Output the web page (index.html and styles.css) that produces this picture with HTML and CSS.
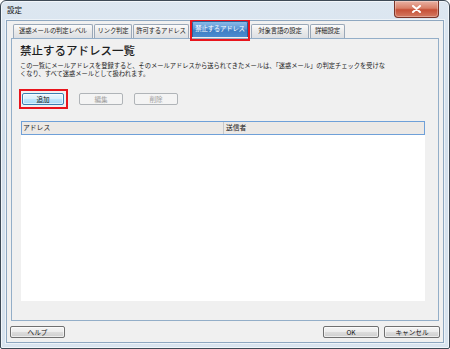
FILE: index.html
```html
<!DOCTYPE html>
<html lang="ja">
<head>
<meta charset="utf-8">
<title>設定</title>
<link rel="stylesheet" href="styles.css">
</head>
<body>
<div class="window">
  <div class="titlebar">
    <span class="title">設定</span>
    <div class="close">
      <svg width="11" height="8" viewBox="0 0 11 8"><path d="M2 1 L9 7 M9 1 L2 7" stroke="#fff" stroke-width="2" stroke-linecap="round"/></svg>
    </div>
  </div>
  <div class="client">
    <div class="tabs">
      <div class="tab t1">迷惑メールの判定レベル</div>
      <div class="tab t2">リンク判定</div>
      <div class="tab t3">許可するアドレス</div>
      <div class="mark mark-tab"><div class="tab t4 selected">禁止するアドレス</div></div>
      <div class="tab t5">対象言語の設定</div>
      <div class="tab t6">詳細設定</div>
    </div>
    <div class="panel">
      <h1 class="heading">禁止するアドレス一覧</h1>
      <p class="desc">この一覧にメールアドレスを登録すると、そのメールアドレスから送られてきたメールは、「迷惑メール」の判定チェックを受けな<br>くなり、すべて迷惑メールとして扱われます。</p>
      <div class="actions">
        <div class="mark mark-btn"><div class="btn highlight">追加</div></div>
        <div class="btn disabled">編集</div>
        <div class="btn disabled">削除</div>
      </div>
      <div class="list">
        <div class="list-head">
          <div class="col col-addr">アドレス</div>
          <div class="col col-sender">送信者</div>
        </div>
        <div class="list-body"></div>
      </div>
    </div>
    <div class="footer">
      <div class="btn help">ヘルプ</div>
      <div class="spacer"></div>
      <div class="btn wide">OK</div>
      <div class="btn wide">キャンセル</div>
    </div>
  </div>
</div>
</body>
</html>
```
FILE: styles.css
```css
* { box-sizing: border-box; }
html, body {
  margin: 0;
  padding: 0;
  width: 450px;
  height: 349px;
  overflow: hidden;
  background: #ffffff;
  font-family: "Noto Sans CJK JP", "Noto Sans", sans-serif;
  color: #1a1a1a;
}
.window {
  width: 450px;
  height: 349px;
  border: 1px solid #3e4a56;
  border-radius: 6px 6px 2px 2px;
  background: linear-gradient(#dde7f1, #d3dfeb 40%, #d9e4ef);
  box-shadow: inset 0 0 0 1px #f2f6fa;
  display: flex;
  flex-direction: column;
}
.titlebar {
  height: 19px;
  display: flex;
  align-items: center;
  padding-left: 6px;
  padding-right: 10px;
}
.title {
  font-size: 7.5px;
  line-height: 10px;
  color: #111;
  margin-top: -2px;
}
.close {
  margin-left: auto;
  align-self: flex-start;
  width: 45px;
  height: 17px;
  border: 1px solid #7a3428;
  border-top: none;
  border-radius: 0 0 4px 4px;
  background: linear-gradient(#e9b2a4, #d98068 45%, #c65037 55%, #d47a62);
  display: flex;
  align-items: center;
  justify-content: center;
  box-shadow: inset 0 0 0 1px rgba(255,255,255,0.3);
}
.client {
  flex: 1;
  margin: 0 5px 5px 5px;
  background: #f0f0f0;
  border: 1px solid #8ea7c0;
  box-shadow: 0 0 0 1px #eef3f8;
  padding: 0 3px 0 3px;
  display: flex;
  flex-direction: column;
}
.tabs {
  height: 17px;
  display: flex;
  align-items: flex-end;
  padding-left: 3px;
}
.tab {
  height: 14px;
  margin-right: 1px;
  font-size: 6.4px;
  line-height: 12px;
  text-align: center;
  color: #222;
  border: 1px solid #9aa8b8;
  border-bottom: none;
  border-radius: 2px 2px 0 0;
  background: linear-gradient(#fbfbfb, #eaeaea 50%, #dcdfe3);
  white-space: nowrap;
  letter-spacing: -0.2px;
}
.t1 { width: 80px; }
.t2 { width: 38px; }
.t3 { width: 56px; }
.t4 { width: 56px; }
.t5 { width: 58px; margin-left: 1px; }
.t6 { width: 35px; }
.mark {
  border: 2px solid #e8141c;
}
.mark-tab {
  height: 21px;
  margin-bottom: -3px;
  padding: 0 0 2px 0;
  display: flex;
  align-items: flex-end;
  align-self: flex-end;
  position: relative;
  z-index: 1;
}
.tab.selected {
  height: 16px;
  line-height: 14px;
  margin-right: 0;
  color: #fff;
  border-color: #2c5f98;
  background: linear-gradient(#8ab9e6, #5b97d6 45%, #3f7ec4 55%, #4a8bd0);
}
.panel {
  flex: 1;
  margin: 0 1px;
  border: 1px solid #93aec8;
  background: #f0f0f0;
  padding: 4px 8px 0 8px;
  display: flex;
  flex-direction: column;
}
.heading {
  margin: 0;
  font-size: 11.5px;
  line-height: 14px;
  font-weight: 500;
  color: #1e1e1e;
}
.desc {
  margin: 5px 0 0 0;
  font-size: 6.25px;
  line-height: 8px;
  color: #222;
  white-space: nowrap;
}
.actions {
  margin-top: 11px;
  margin-left: -1px;
  display: flex;
  align-items: center;
  gap: 11px;
}
.mark-btn {
  padding: 2px 2px 2px 1px;
}
.btn {
  height: 12px;
  width: 44px;
  font-size: 6.6px;
  line-height: 10px;
  text-align: center;
  color: #111;
  border: 1px solid #707070;
  border-radius: 2px;
  background: linear-gradient(#f4f4f4, #ececec 48%, #dcdcdc 52%, #cfcfcf);
  box-shadow: inset 0 0 0 1px rgba(255,255,255,0.6);
}
.btn.highlight {
  width: 42px;
  border-color: #3c7fb1;
  background: linear-gradient(#eaf6fd, #d9f0fc 48%, #bee6fd 52%, #a7d9f5);
}
.btn.disabled {
  color: #a0a0a0;
  border-color: #b0b4b8;
  background: #f4f4f4;
  box-shadow: none;
}
.list {
  margin-top: 12px;
  margin-left: 1px;
  width: 404px;
  display: flex;
  flex-direction: column;
}
.list-head {
  height: 14px;
  display: flex;
  background: #ece9e6;
  border: 1px solid #6fa0d8;
}
.col {
  font-size: 6.8px;
  line-height: 10px;
  padding-left: 1px;
  color: #222;
}
.col-addr {
  width: 202px;
  border-right: 1px solid #c8c8c8;
}
.col-sender {
  flex: 1;
  padding-left: 2px;
}
.list-body {
  height: 166px;
  background: #ffffff;
}
.footer {
  height: 21px;
  display: flex;
  align-items: flex-start;
  padding-top: 5px;
  gap: 5px;
}
.spacer { flex: 1; }
.btn.wide { width: 56px; }
.btn.help { width: 55px; }
```
